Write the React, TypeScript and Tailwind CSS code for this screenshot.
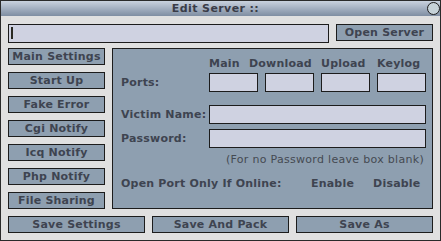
import React from "react";

const font = { fontFamily: '"DejaVu Sans", Verdana, sans-serif' };

function Btn({ label, className = "" }: { label: string; className?: string }) {
  return (
    <div
      className={`h-[17px] border border-[#1c1c1c] bg-[#8e9fb0] flex items-center justify-center text-[11px] font-bold text-[#3e4450] leading-none tracking-[0.2px] ${className}`}
    >
      {label}
    </div>
  );
}

function Field({ className = "" }: { className?: string }) {
  return <div className={`h-[19px] border border-[#1c1c1c] bg-[#cfd2e1] ${className}`} />;
}

const sideButtons = [
  "Main Settings",
  "Start Up",
  "Fake Error",
  "Cgi Notify",
  "Icq Notify",
  "Php Notify",
  "File Sharing",
];

const ports = ["Main", "Download", "Upload", "Keylog"];

export default function App() {
  return (
    <div
      className="w-[441px] h-[241px] border border-[#2a2a2a] bg-[#e0e0e0] flex flex-col overflow-hidden"
      style={font}
    >
      {/* title bar */}
      <div className="relative h-[15px] bg-gradient-to-b from-[#c9d2de] via-[#a3afc0] to-[#7f8ea2] flex items-center justify-center">
        <span className="text-[11px] font-bold text-[#3a3c48] leading-none pr-[10px] tracking-[0.4px]">Edit Server ::</span>
        <div className="absolute right-0 top-[1px] w-[13px] h-[13px] rounded-full border border-[#1c1c1c] bg-[#c6d2d8]" />
      </div>

      <div className="flex flex-col px-[7px] pt-[8px]">
        {/* path row */}
        <div className="flex items-start gap-[7px]">
          <div className="relative w-[321px] h-[19px] border border-[#1c1c1c] bg-[#cfd2e1]">
            <div className="absolute left-[2px] top-[2px] w-[2px] h-[12px] bg-[#2a2a22]" />
          </div>
          <Btn label="Open Server" className="w-[97px]" />
        </div>

        {/* middle */}
        <div className="flex gap-[7px] mt-[5px]">
          <div className="w-[97px] flex flex-col gap-[7px]">
            {sideButtons.map((b) => (
              <Btn key={b} label={b} />
            ))}
          </div>

          <div className="w-[321px] h-[161px] border border-[#1c1c1c] bg-[#8e9fb0] pl-[8px] pr-[6px] pt-[9px] text-[11px] font-bold text-[#3e4450] tracking-[0.2px]">
            <div className="flex h-[12px] leading-[12px] whitespace-nowrap">
              <div className="ml-[88px]">Main</div>
              <div className="ml-auto w-[72px]">Download</div>
              <div className="w-[56px]">Upload</div>
              <div className="w-[49px]">Keylog</div>
            </div>
            <div className="flex items-start mt-[3px]">
              <div className="w-[88px] pt-[2px]">Ports:</div>
              <div className="flex gap-[7px]">
                {ports.map((p) => (
                  <Field key={p} className="w-[49px]" />
                ))}
              </div>
            </div>
            <div className="flex items-start mt-[13px]">
              <div className="w-[88px] pt-[2px]">Victim Name:</div>
              <Field className="w-[217px]" />
            </div>
            <div className="flex items-start mt-[5px]">
              <div className="w-[88px] pt-[2px]">Password:</div>
              <Field className="w-[217px]" />
            </div>
            <div className="mt-[6px] h-[12px] leading-[12px] text-right pr-[2px] font-normal text-[11px] tracking-[0.3px] text-[#454a52] whitespace-nowrap">
              (For no Password leave box blank)
            </div>
            <div className="flex mt-[12px] h-[12px] leading-[12px] whitespace-nowrap">
              <div className="w-[190px]">Open Port Only If Online:</div>
              <div>Enable</div>
              <div className="ml-[19px]">Disable</div>
            </div>
          </div>
        </div>

        {/* bottom buttons */}
        <div className="grid grid-cols-3 gap-[7px] mt-[7px]">
          <Btn label="Save Settings" />
          <Btn label="Save And Pack" />
          <Btn label="Save As" />
        </div>
      </div>
    </div>
  );
}
